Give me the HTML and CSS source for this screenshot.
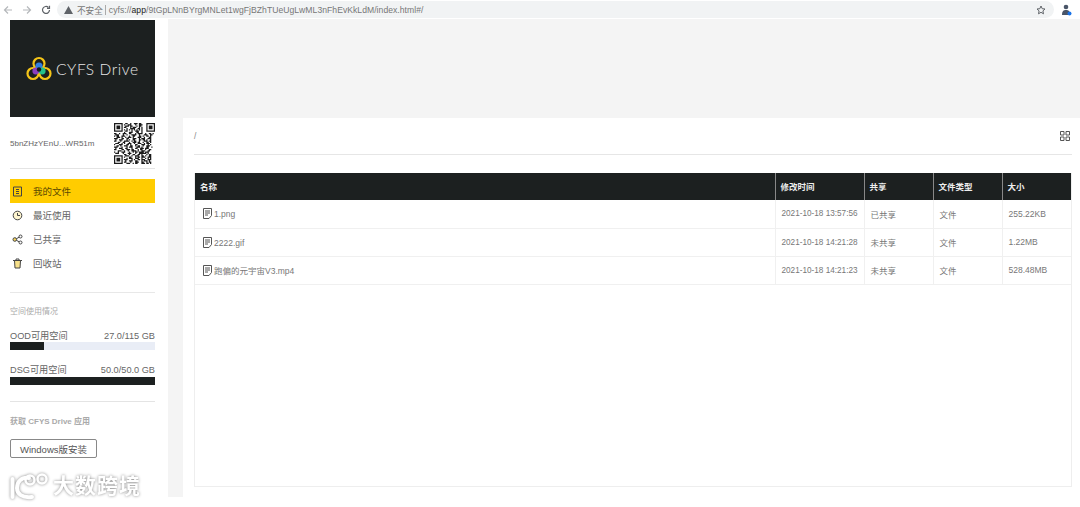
FILE: index.html
```html
<!DOCTYPE html>
<html lang="zh-CN">
<head>
    <meta charset="UTF-8">
    <title>CYFS Drive</title>
    <link rel="stylesheet" href="styles.css">
</head>
<body>
    <div class="browser-bar">
        <div class="nav-buttons">
            <svg width="10" height="10" viewBox="0 0 10 10" class="nav-off"><path d="M9 5H1.500M5 1.500 1.500 5 5 8.500"/></svg>
            <svg width="10" height="10" viewBox="0 0 10 10" class="nav-off"><path d="M1 5h7.500M5 1.500 8.500 5 5 8.500"/></svg>
            <svg width="10" height="10" viewBox="0 0 10 10" class="nav-on"><path d="M8.500 5A3.500 3.500 0 1 1 7.400 2.400M8.500 .8v2.500H6"/></svg>
        </div>
        <div class="address">
            <svg width="9" height="8" viewBox="0 0 9 8" class="warn"><path d="M4.500 0 9 8H0z"/></svg>
            <span class="not-secure">不安全</span>
            <span class="divider"></span>
            <span class="url">cyfs://<b>app</b>/9tGpLNnBYrgMNLet1wgFjBZhTUeUgLwML3nFhEvKkLdM/index.html#/</span>
            <svg width="10" height="10" viewBox="0 0 10 10" class="star"><path d="M5 1 6.200 3.700 9 4 6.900 5.900 7.500 8.800 5 7.300 2.500 8.800 3.100 5.900 1 4 3.800 3.700z"/></svg>
        </div>
        <svg width="11" height="12" viewBox="0 0 11 12" class="profile"><circle cx="5" cy="3" r="2.300" fill="#4a5568"/><path d="M1 11c0-4 1.500-5 4-5s4 1 4 5z" fill="#4a5568"/><circle cx="8.500" cy="9.500" r="2" fill="#1a73e8"/></svg>
    </div>

    <div class="page">
        <aside class="sidebar">
            <div class="logo-box">
                <svg width="26" height="25" viewBox="0 0 26 25" class="logo-mark">
                    <circle cx="13" cy="7.500" r="5.500" fill="none" stroke="#f5c518" stroke-width="2.200"/>
                    <circle cx="7" cy="17.500" r="5.500" fill="none" stroke="#f5c518" stroke-width="2.200"/>
                    <circle cx="19" cy="17.500" r="5.500" fill="none" stroke="#f5c518" stroke-width="2.200"/>
                    <circle cx="13" cy="10" r="3.600" fill="#2f7fe0"/>
                    <circle cx="9.800" cy="15" r="3.400" fill="#8a3fc0"/>
                    <circle cx="16.200" cy="15" r="3.400" fill="#25c08a"/>
                    <circle cx="13" cy="13.500" r="2.200" fill="#14181a"/>
                </svg>
                <span class="logo-text">CYFS Drive</span>
            </div>

            <div class="account">
                <span class="account-id">5bnZHzYEnU...WR51m</span>
                <svg width="41" height="41" viewBox="0 0 33 33" class="qr">
                    <path d="M0 0h7v7H0zM1 1v5h5V1zM2 2h3v3H2zM26 0h7v7h-7zM27 1v5h5V1zM28 2h3v3h-3zM0 26h7v7H0zM1 27v5h5v-5zM2 28h3v3H2z" fill="#1a1a1a" fill-rule="evenodd"/>
                    <path stroke="#1a1a1a" fill="none" d="M9 .5h2m2 0h1m2 0h3m1 0h2M8 1.500h1m2 0h3m3 0h1m2 0h3M9 2.500h3m1 0h2m3 0h1m1 0h2M8 3.500h2m3 0h1m1 0h3m2 0h1m1 0h1M10 4.500h1m2 0h4m2 0h2m1 0h1M8 5.500h1m1 0h1m1 0h1m1 0h1m1 0h1m1 0h1m1 0h1m1 0h1M9 6.500h2m3 0h1m2 0h3m2 0h1M8 7.500h1m3 0h3m3 0h2m2 0h1M0 8.500h2m2 0h1m2 0h3m2 0h2m3 0h1m1 0h4m2 0h1m2 0h2m1 0h1M1 9.500h3m3 0h1m2 0h1m3 0h4m2 0h1m3 0h3m2 0h2M0 10.500h1m1 0h2m2 0h3m3 0h1m2 0h2m3 0h2m1 0h1m2 0h2m1 0h1M2 11.500h3m1 0h1m2 0h1m1 0h3m1 0h1m3 0h3m2 0h1m3 0h2M0 12.500h3m3 0h2m2 0h2m3 0h3m2 0h1m1 0h3m2 0h3M1 13.500h1m2 0h3m3 0h1m1 0h1m2 0h2m3 0h2m1 0h2m1 0h1m2 0h1M0 14.500h2m3 0h1m2 0h4m2 0h1m1 0h2m2 0h1m3 0h3m1 0h2M3 15.500h2m2 0h2m3 0h1m2 0h3m1 0h2m2 0h1m2 0h2m1 0h1M1 16.500h3m2 0h1m1 0h1m2 0h3m2 0h1m2 0h3m2 0h1m1 0h3M0 17.500h1m3 0h3m3 0h2m1 0h1m3 0h2m3 0h3m2 0h1m1 0h1M2 18.500h2m1 0h1m2 0h3m2 0h2m2 0h1m1 0h2m2 0h1m2 0h3M0 19.500h3m3 0h1m3 0h1m1 0h3m3 0h3m1 0h1m3 0h2m2 0h1M1 20.500h1m2 0h3m2 0h2m3 0h1m2 0h2m2 0h3m1 0h3M0 21.500h2m4 0h2m2 0h3m1 0h2m3 0h1m1 0h2m2 0h1m2 0h2M3 22.500h3m2 0h1m2 0h1m2 0h4m1 0h1m2 0h3m2 0h2M0 23.500h1m2 0h1m2 0h3m3 0h1m2 0h1m1 0h2m1 0h4m1 0h3M1 24.500h3m3 0h1m3 0h3m3 0h1m2 0h6m1 0h1M8 25.500h2m2 0h1m2 0h2m2 0h2m1 0h1m3 0h1m1 0h2M9 26.500h3m2 0h1m2 0h3m2 0h2m1 0h1m2 0h2M8 27.500h1m3 0h2m3 0h1m1 0h2m1 0h3m2 0h3M10 28.500h1m1 0h3m2 0h3m2 0h1m2 0h1m1 0h1m1 0h1M8 29.500h3m3 0h1m1 0h1m2 0h2m1 0h3m2 0h3M9 30.500h1m2 0h3m2 0h2m3 0h1m1 0h3m1 0h1M8 31.500h2m3 0h1m3 0h3m2 0h2m2 0h1m1 0h2M10 32.500h3m2 0h1m1 0h2m3 0h3m1 0h2m1 0h1"/>
                </svg>
            </div>

            <nav class="menu">
                <a class="menu-item active">
                    <svg width="11" height="11" viewBox="0 0 11 11" class="menu-icon"><path d="M1.500 1h8v9h-8zM4 3.500h3M4 5.500h3M4 7.500h3"/></svg>
                    我的文件
                </a>
                <a class="menu-item">
                    <svg width="11" height="11" viewBox="0 0 11 11" class="menu-icon"><circle cx="5.500" cy="5.500" r="4.300" fill="#fff6d0"/><path d="M5.500 3v2.500H8"/></svg>
                    最近使用
                </a>
                <a class="menu-item">
                    <svg width="11" height="11" viewBox="0 0 11 11" class="menu-icon"><circle cx="2.800" cy="5.500" r="1.800" fill="#f4d35e"/><circle cx="8.500" cy="2.500" r="1.500"/><circle cx="8.500" cy="8.500" r="1.500"/><path d="M4.400 4.700 7.200 3.200M4.400 6.300 7.200 7.800"/></svg>
                    已共享
                </a>
                <a class="menu-item">
                    <svg width="11" height="11" viewBox="0 0 11 11" class="menu-icon"><path d="M1 2.500h9M4 2.500V1h3v1.500"/><path d="M2.500 2.500 3 10h5l.5-7.500z" fill="#f7e08a"/></svg>
                    回收站
                </a>
            </nav>

            <section class="usage">
                <h4 class="side-title">空间使用情况</h4>
                <div class="usage-row usage-first"><span>OOD可用空间</span><span>27.0/115 GB</span></div>
                <div class="bar"><div class="bar-fill" style="width: 23.500%"></div></div>
                <div class="usage-row"><span>DSG可用空间</span><span>50.0/50.0 GB</span></div>
                <div class="bar"><div class="bar-fill" style="width: 100%"></div></div>
            </section>

            <section class="get-app">
                <h4 class="side-title">获取 CFYS Drive 应用</h4>
                <button class="install">Windows版安装</button>
            </section>
        </aside>

        <main class="main">
            <div class="panel">
                <div class="path-row">
                    <span class="path">/</span>
                    <svg width="10" height="10" viewBox="0 0 10 10" class="grid-icon"><path d="M.5.500h3.500v3.500H.500zM6 .500h3.500v3.500H6zM.5 6h3.500v3.500H.500zM6 6h3.500v3.500H6z"/></svg>
                </div>
                <div class="table-wrap">
                    <table class="files">
                        <colgroup>
                            <col class="col-name"><col class="col-time"><col class="col-small"><col class="col-small"><col class="col-small">
                        </colgroup>
                        <thead>
                            <tr><th>名称</th><th>修改时间</th><th>共享</th><th>文件类型</th><th>大小</th></tr>
                        </thead>
                        <tbody>
                            <tr>
                                <td class="name-cell"><svg width="9" height="11" viewBox="0 0 9 11" class="doc"><path d="M.5.500h8v7l-2.500 3H.500zM2 3h5M2 5h5M2 7h3"/></svg>1.png</td>
                                <td class="time-cell">2021-10-18 13:57:56</td><td>已共享</td><td>文件</td><td>255.22KB</td>
                            </tr>
                            <tr>
                                <td class="name-cell"><svg width="9" height="11" viewBox="0 0 9 11" class="doc"><path d="M.5.500h8v7l-2.500 3H.500zM2 3h5M2 5h5M2 7h3"/></svg>2222.gif</td>
                                <td class="time-cell">2021-10-18 14:21:28</td><td>未共享</td><td>文件</td><td>1.22MB</td>
                            </tr>
                            <tr>
                                <td class="name-cell"><svg width="9" height="11" viewBox="0 0 9 11" class="doc"><path d="M.5.500h8v7l-2.500 3H.500zM2 3h5M2 5h5M2 7h3"/></svg>跑偏的元宇宙V3.mp4</td>
                                <td class="time-cell">2021-10-18 14:21:23</td><td>未共享</td><td>文件</td><td>528.48MB</td>
                            </tr>
                        </tbody>
                    </table>
                </div>
            </div>
        </main>
    </div>

    <div class="watermark">
        <svg width="44" height="28" viewBox="0 0 44 28" class="wm-logo">
            <g fill="none" stroke="#fff" stroke-linecap="round">
                <path d="M3.500 7v18" stroke-width="4"/>
                <path d="M20 6C12 5 8 10 8 16s5 10 15 9" stroke-width="4"/>
                <circle cx="21" cy="8" r="4.500" stroke-width="2.500"/>
                <circle cx="33" cy="7" r="4.500" stroke-width="2.500"/>
            </g>
        </svg>
        <span class="wm-text">大数跨境</span>
    </div>
</body>
</html>
```

FILE: styles.css
```css
* {
    box-sizing: border-box;
}
body {
    margin: 0;
    height: 507px;
    overflow: hidden;
    background: #fff;
    font-family: "Liberation Sans", "Noto Sans CJK SC", sans-serif;
    color: #555;
    position: relative;
}

/* browser chrome */
.browser-bar {
    height: 19px;
    display: flex;
    align-items: center;
    background: #fff;
    padding: 0 8px 0 3px;
}
.nav-buttons {
    display: flex;
    gap: 9px;
    width: 54px;
}
.nav-buttons svg {
    fill: none;
    stroke-width: 1.2;
}
.nav-off {
    stroke: #b5b8bb;
}
.nav-on {
    stroke: #5f6368;
}
.address {
    flex: 1;
    height: 17px;
    margin-right: 7px;
    display: flex;
    align-items: center;
    background: #f1f3f4;
    border-radius: 9px;
    padding: 0 8px 0 7px;
    font-size: 8.6px;
    color: #777;
}
.warn {
    fill: #5f6368;
    margin-right: 4px;
}
.not-secure {
    color: #777;
}
.divider {
    width: 1px;
    height: 10px;
    background: #aaa;
    margin: 0 3px 0 2px;
}
.url {
    letter-spacing: 0.04px;
}
.url b {
    font-weight: normal;
    color: #222;
}
.star {
    margin-left: auto;
    fill: none;
    stroke: #5f6368;
}
.profile {
    flex: none;
}

.page {
    display: flex;
    height: 478px;
}

/* left column */
.sidebar {
    width: 168px;
    flex: none;
    padding: 1px 13px 0 10px;
    background: #fff;
}
.logo-box {
    height: 97px;
    background: #1c2020;
    display: flex;
    align-items: center;
    padding-left: 16px;
    gap: 4px;
}
.logo-text {
    font-family: Lato, sans-serif;
    font-weight: 300;
    font-size: 15.5px;
    letter-spacing: 0.6px;
    color: #e8e8e8;
}
.account {
    height: 52px;
    display: flex;
    align-items: center;
    justify-content: space-between;
    border-bottom: 1px solid #e4e4e4;
    padding-top: 2px;
}
.account-id {
    font-size: 8px;
    color: #666;
}
.menu {
    padding: 10px 0 16px;
    border-bottom: 1px solid #e8e8e8;
    height: 124px;
}
.menu-item {
    display: flex;
    align-items: center;
    height: 24px;
    font-size: 9.5px;
    color: #666;
}
.menu-item.active {
    background: #ffcc00;
    color: #5c4a00;
}
.menu-icon {
    margin: 0 10px 0 2px;
    fill: none;
    stroke: #444;
}
.side-title {
    margin: 0;
    font-size: 8px;
    font-weight: normal;
    color: #aaa;
    line-height: 12px;
}
.usage {
    height: 109px;
    padding-top: 13px;
    border-bottom: 1px solid #e4e4e4;
}
.usage-row {
    display: flex;
    justify-content: space-between;
    align-items: flex-end;
    font-size: 9.2px;
    line-height: 11px;
    color: #666;
    height: 12px;
    margin-top: 14px;
    margin-bottom: 1px;
}
.usage-first {
    margin-top: 12px;
    margin-bottom: 0;
}
.bar {
    height: 8px;
    background: #e9edf6;
}
.bar-fill {
    height: 100%;
    background: #1c2020;
}
.get-app {
    padding-top: 14px;
}
.get-app .side-title {
    font-weight: bold;
}
.install {
    display: block;
    margin-top: 11px;
    width: 87px;
    height: 19px;
    padding: 0;
    background: #fff;
    border: 1px solid #888;
    border-radius: 2px;
    font: 9.5px "Liberation Sans", "Noto Sans CJK SC", sans-serif;
    color: #555;
}

/* right side */
.main {
    flex: 1;
    background: #f4f4f4;
    padding: 99px 0 0 15px;
}
.panel {
    height: 100%;
    background: #fff;
    padding: 0 9px 10px 11px;
    display: flex;
    flex-direction: column;
}
.path-row {
    height: 37px;
    flex: none;
    display: flex;
    align-items: center;
    justify-content: space-between;
    border-bottom: 1px solid #e6e6e6;
    font-size: 8.5px;
    color: #888;
    padding: 0 2px 0 0;
}
.grid-icon {
    fill: none;
    stroke: #555;
}
.table-wrap {
    flex: 1;
    margin-top: 18px;
    border: 1px solid #eee;
    border-top: none;
}
.files {
    width: 100%;
    table-layout: fixed;
    border-collapse: collapse;
    font-size: 8.5px;
}
.col-name {
    width: 580px;
}
.col-time {
    width: 89px;
}
.col-small {
    width: 69px;
}
.files th {
    height: 27px;
    background: #1c2020;
    color: #eee;
    text-align: left;
    padding: 0 0 2px 5px;
    border-left: 1px solid #888;
    font-size: 8.5px;
}
.files th:first-child {
    border-left: none;
}
.files td {
    height: 28px;
    padding: 0 0 0 6px;
    color: #777;
    border-left: 1px solid #f0f0f0;
    border-bottom: 1px solid #f0f0f0;
}
.files td:first-child {
    border-left: none;
}
.files .name-cell {
    padding-left: 8px;
    color: #777;
}
.files .time-cell {
    font-size: 8.2px;
}
.doc {
    vertical-align: -2px;
    margin-right: 2px;
    fill: none;
    stroke: #555;
}

/* image watermark in the corner */
.watermark {
    position: absolute;
    left: 9px;
    top: 472px;
    display: flex;
    align-items: center;
    filter: drop-shadow(0 0 1.5px #8a8a8a);
}
.wm-text {
    font-size: 21px;
    line-height: 28px;
    color: #fff;
    font-weight: bold;
    letter-spacing: 1px;
}
```
